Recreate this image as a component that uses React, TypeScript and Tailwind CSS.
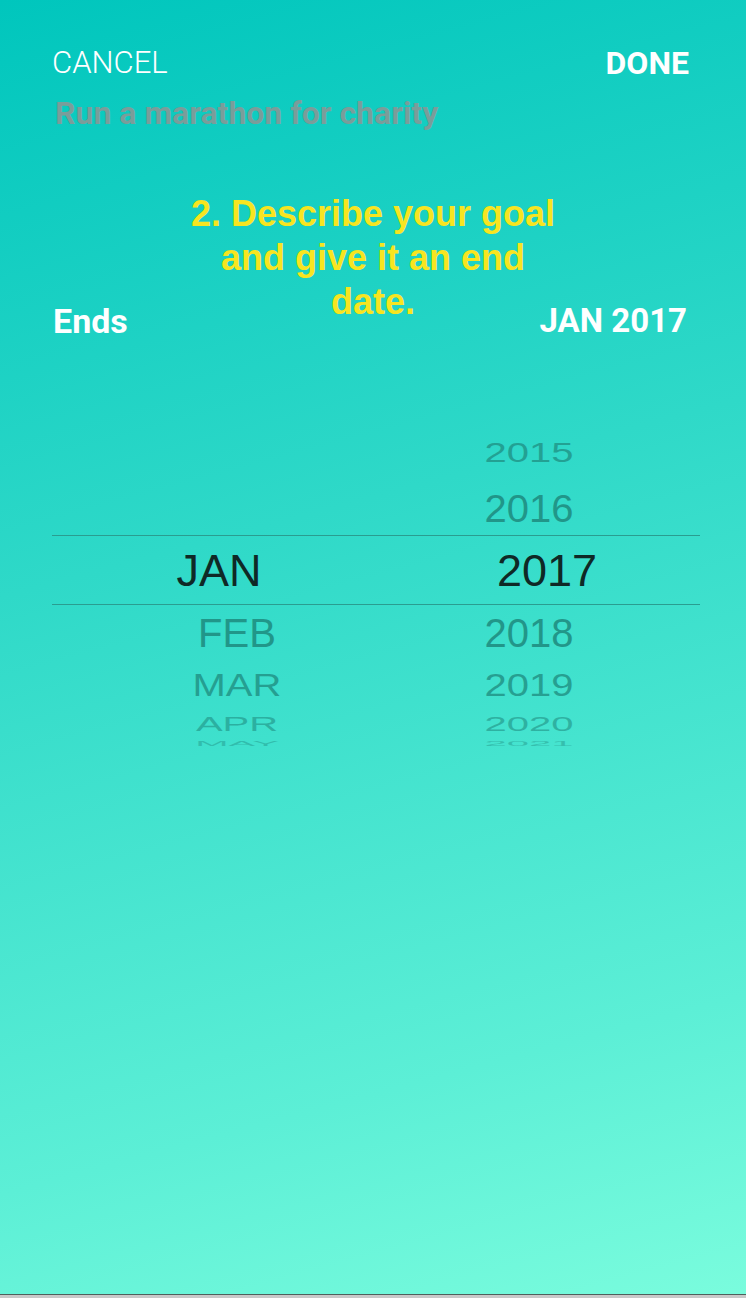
import React from "react";

const roboto = { fontFamily: "Roboto, 'Noto Sans', sans-serif" };
const arial = { fontFamily: "'Liberation Sans', Arial, sans-serif" };

type Row = { m?: string; y: string; h: string; s: string; o: string };

export default function App() {
  return (
    <div className="w-[746px] h-[1298px] overflow-hidden bg-[#c9c9c9]">
      <div className="relative w-[746px] h-[1294px] bg-[linear-gradient(165deg,#00c6bd_0%,#2fd9c8_40%,#5cefd6_80%,#7afcdd_100%)]">
        {/* Top bar */}
        <div className="flex justify-between items-start px-[52px] pt-[48px]" style={roboto}>
          <span className="text-white text-[31px] leading-[30px] font-light">CANCEL</span>
          <span className="text-white text-[32px] leading-[30px] font-bold pr-[5px]">DONE</span>
        </div>
        <div className="px-[55px] pt-[18px]" style={roboto}>
          <span className="text-[#7a9d9a] text-[32px] leading-[34px] font-bold">Run a marathon for charity</span>
        </div>

        {/* Ends row */}
        <div className="flex justify-between items-center px-[53px] pt-[173px]" style={roboto}>
          <span className="text-white text-[34px] leading-[34px] font-bold">Ends</span>
          <span className="text-white text-[33px] leading-[34px] font-bold pr-[6px]">JAN 2017</span>
        </div>

        {/* Picker */}
        <div className="mt-[86px]" style={arial}>
          {(
            [
              { y: "2015", h: "h-[56px]", s: "scale-y-[0.7]", o: "opacity-70" },
              { y: "2016", h: "h-[55px]", s: "scale-y-[0.97]", o: "opacity-85" },
            ] as Row[]
          ).map((r) => (
            <PickerRow key={r.y} r={r} />
          ))}
          <div className="ml-[52px] mr-[46px] h-[70px] border-y border-[#2a9d90] flex items-center">
            <div className="w-[200px] ml-[67px] text-center text-[45px] leading-[45px] text-[#0f2926]">JAN</div>
            <div className="w-[200px] ml-[128px] text-center text-[45px] leading-[45px] text-[#0f2926]">2017</div>
          </div>
          {(
            [
              { m: "FEB", y: "2018", h: "h-[56px]", s: "scale-y-[1]", o: "opacity-85" },
              { m: "MAR", y: "2019", h: "h-[48px]", s: "scale-y-[0.8]", o: "opacity-75" },
              { m: "APR", y: "2020", h: "h-[30px]", s: "scale-y-[0.52]", o: "opacity-55" },
              { m: "MAY", y: "2021", h: "h-[8px]", s: "scale-y-[0.18]", o: "opacity-40" },
            ] as Row[]
          ).map((r) => (
            <PickerRow key={r.y} r={r} />
          ))}
        </div>

        {/* Overlay annotation */}
        <div
          className="absolute left-[183px] top-[192px] w-[380px] text-center text-[#f7e520] text-[36px] leading-[44px] font-bold"
          style={arial}
        >
          2. Describe your goal and give it an end date.
        </div>
      </div>
      <div className="h-[1px] bg-[#4f5f5c]" />
    </div>
  );
}

function PickerRow({ r }: { r: Row }) {
  return (
    <div className={`flex items-center overflow-visible ${r.h}`}>
      <div
        className={`w-[200px] ml-[137px] text-center text-[40px] leading-[40px] text-[#1e8a7e] ${r.s} ${r.o}`}
      >
        {r.m ?? ""}
      </div>
      <div
        className={`w-[200px] ml-[92px] text-center text-[40px] leading-[40px] text-[#1e8a7e] ${r.s} ${r.o}`}
      >
        {r.y}
      </div>
    </div>
  );
}
